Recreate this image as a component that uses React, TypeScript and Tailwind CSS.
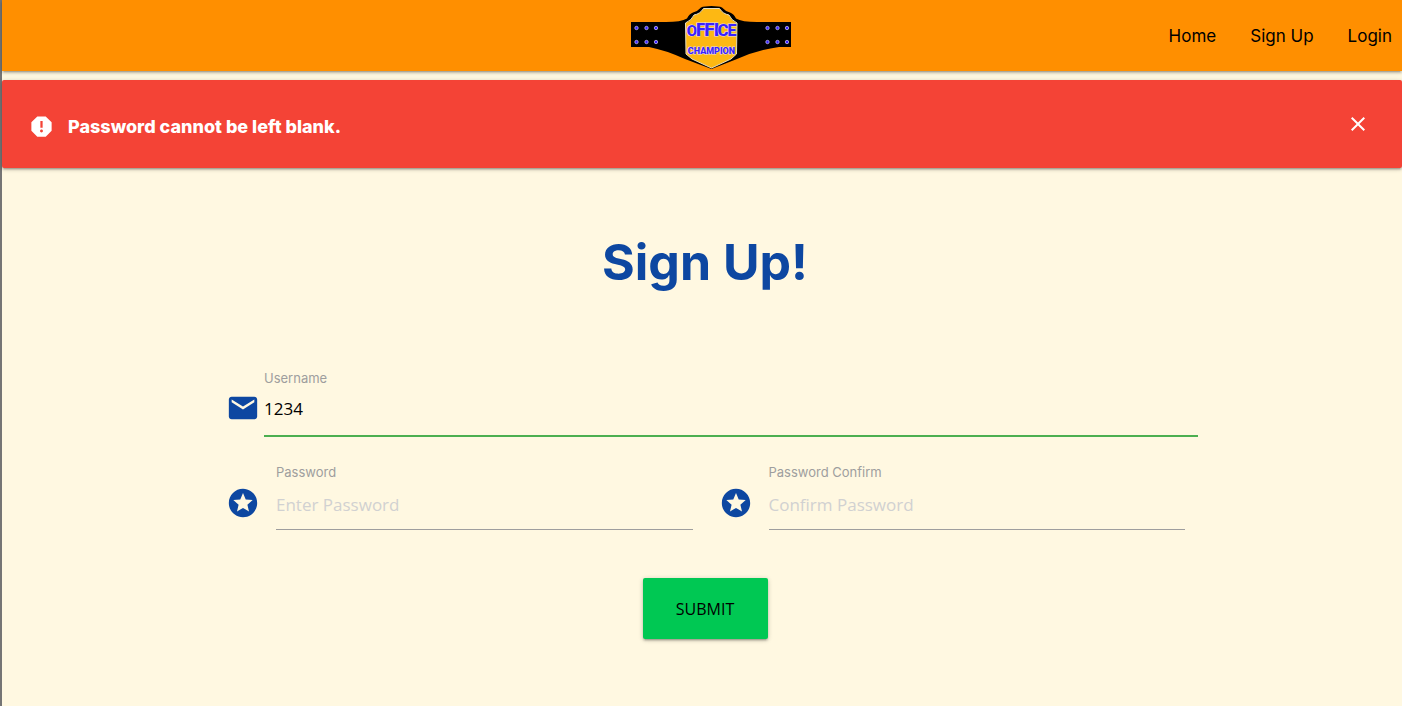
import { useState } from "react";
import type { ReactNode } from "react";

const ELEVATION =
  "shadow-[0_2px_2px_0_rgba(0,0,0,0.14),0_3px_1px_-2px_rgba(0,0,0,0.12),0_1px_5px_0_rgba(0,0,0,0.2)]";

const STUDS = [5.5, 15.5, 25, 136.5, 146.5, 156];

const OFFICE_LETTERS = [
  { char: "O", x: 61, size: 15 },
  { char: "F", x: 70, size: 18 },
  { char: "F", x: 78.5, size: 19 },
  { char: "I", x: 85.5, size: 19 },
  { char: "C", x: 92, size: 17 },
  { char: "E", x: 101, size: 16 },
];

function BeltLogo() {
  return (
    <svg viewBox="0 0 160 64" className="block h-16 w-40" role="img" aria-label="Office Champion">
      <path
        d="M0 16H35Q50 16 56 12.500Q58 8 62 6.500Q67 5 70 1.500Q73 0 80.500 0Q88 0 91 1.500Q94 5 99 6.500Q103 8 105 12.500Q111 16 126 16H160V41H148Q126 44 106 53L80.500 63L54 53Q34 44 18 41H0Z"
        fill="#000"
      />
      <path
        d="M54.500 17Q61 14 63 9Q69 8 72.500 2.500H88.500Q92 8 98 9Q100 14 106 17L105.500 48L100 53L80.500 62L61 53L55 48Z"
        fill="#fdb813"
        stroke="#e5dcc0"
        strokeWidth="1"
      />
      {STUDS.map((x) => (
        <g key={x} fill="#3a22ff" stroke="#b9b4ee" strokeWidth="0.8">
          <circle cx={x} cy="22" r="1.700" />
          <circle cx={x} cy="36" r="1.700" />
        </g>
      ))}
      <g
        fill="#3a22ff"
        stroke="#ded8ee"
        strokeWidth="1"
        paintOrder="stroke"
        textAnchor="middle"
        fontWeight="800"
        fontFamily="Roboto, 'Liberation Sans', sans-serif"
      >
        <text y="30">
          {OFFICE_LETTERS.map(({ char, x, size }) => (
            <tspan key={x} x={x} fontSize={size}>
              {char}
            </tspan>
          ))}
        </text>
        <text x="80.500" y="48" fontSize="9">CHAMPION</text>
      </g>
    </svg>
  );
}

function MailIcon() {
  return (
    <svg viewBox="0 0 24 24" className="size-[34px] shrink-0 fill-[#0d47a1]" aria-hidden="true">
      <path d="M20 4H4c-1.100 0-1.990.9-1.990 2L2 18c0 1.100.9 2 2 2h16c1.100 0 2-.9 2-2V6c0-1.100-.9-2-2-2zm0 4l-8 5-8-5V6l8 5 8-5v2z" />
    </svg>
  );
}

function StarsIcon() {
  return (
    <svg viewBox="0 0 24 24" className="size-[34px] shrink-0 fill-[#0d47a1]" aria-hidden="true">
      <path d="M11.990 2C6.470 2 2 6.480 2 12s4.470 10 9.990 10C17.520 22 22 17.520 22 12S17.520 2 11.990 2zm4.240 16L12 15.450 7.770 18l1.120-4.810-3.730-3.230 4.920-.42L12 5l1.920 4.530 4.920.42-3.730 3.230L16.230 18z" />
    </svg>
  );
}

function ReportIcon() {
  return (
    <svg viewBox="0 0 24 24" className="size-[27px] fill-white" aria-hidden="true">
      <path d="M15.730 3H8.270L3 8.270v7.460L8.270 21h7.460L21 15.730V8.270L15.730 3zM12 17.300c-.72 0-1.300-.58-1.300-1.300 0-.72.58-1.300 1.300-1.300.72 0 1.300.58 1.300 1.300 0 .72-.58 1.300-1.300 1.300zm1-4.300h-2V7h2v6z" />
    </svg>
  );
}

type FieldProps = {
  id: string;
  label: string;
  icon: ReactNode;
  type?: string;
  placeholder?: string;
  defaultValue?: string;
  valid?: boolean;
};

function Field({ id, label, icon, type = "text", placeholder, defaultValue, valid }: FieldProps) {
  return (
    <div className={valid ? "flex gap-1" : "flex gap-4"}>
      <div className="-ml-1 flex w-9 shrink-0 justify-end pt-5">
        <div className={valid ? "flex h-9 items-center" : "flex h-[38px] items-center"}>{icon}</div>
      </div>
      <div className="min-w-0 grow">
        <label htmlFor={id} className="block text-[13px] leading-4 text-[#9e9e9e]">
          {label}
        </label>
        <input
          id={id}
          type={type}
          placeholder={placeholder}
          defaultValue={defaultValue}
          className={
            valid
              ? "block h-[51px] w-full border-b-2 border-[#4caf50] bg-transparent pb-1 font-['Open_Sans',sans-serif] text-[17px] text-black outline-none"
              : "block h-[50px] w-full border-b border-[#9e9e9e] bg-transparent font-['Open_Sans',sans-serif] text-[17px] text-black outline-none placeholder:text-[#d1d1d1]"
          }
        />
      </div>
    </div>
  );
}

export default function App() {
  const [showAlert, setShowAlert] = useState(true);

  return (
    <div className="min-h-screen border-l-2 border-[#757575] bg-[#fff8e1] font-['Inter',sans-serif]">
      <nav className={`grid h-[71px] grid-cols-[1fr_auto_1fr] items-center bg-[#ff8f00] ${ELEVATION}`}>
        <a href="#home" className="col-start-2 ml-[18px] pt-1">
          <BeltLogo />
        </a>
        <ul className="flex justify-end gap-[34px] pt-0.5 pr-2.5 text-[17px] text-black">
          <li><a href="#home">Home</a></li>
          <li><a href="#signup">Sign Up</a></li>
          <li><a href="#login">Login</a></li>
        </ul>
      </nav>

      {showAlert && (
        <div
          role="alert"
          className={`mt-[9px] flex h-[88px] items-center rounded-xs bg-[#f44336] pr-7 pl-[26px] text-white ${ELEVATION}`}
        >
          <div className="pt-1">
            <ReportIcon />
          </div>
          <p className="ml-[13px] grow pt-1.5 text-lg font-extrabold">Password cannot be left blank.</p>
          <button type="button" aria-label="Close" onClick={() => setShowAlert(false)} className="p-1">
            <svg viewBox="0 0 24 24" className="size-6 fill-white" aria-hidden="true">
              <path d="M19 6.410L17.590 5 12 10.590 6.410 5 5 6.410 10.590 12 5 17.590 6.410 19 12 13.410 17.590 19 19 17.590 13.410 12z" />
            </svg>
          </button>
        </div>
      )}

      <main className="pt-16 pl-1.5">
        <h1 className="text-center text-[50px] leading-[60px] font-bold text-[#0d47a1]">Sign Up!</h1>
        <form className="pt-[78px] pb-16" onSubmit={(e) => e.preventDefault()}>
          <div className="pl-4">
            <div className="mx-auto w-full max-w-[970px]">
              <Field id="username" label="Username" icon={<MailIcon />} defaultValue="1234" valid />
              <div className="mt-[27px] grid grid-cols-2 gap-7 pr-[13px]">
                <Field id="password" label="Password" type="password" icon={<StarsIcon />} placeholder="Enter Password" />
                <Field
                  id="password-confirm"
                  label="Password Confirm"
                  type="password"
                  icon={<StarsIcon />}
                  placeholder="Confirm Password"
                />
              </div>
            </div>
          </div>
          <div className="mt-12 flex justify-center">
            <button
              type="submit"
              className={`h-[61px] w-[125px] rounded-xs bg-[#00c853] font-['Open_Sans',sans-serif] text-base text-black ${ELEVATION}`}
            >
              SUBMIT
            </button>
          </div>
        </form>
      </main>
    </div>
  );
}
